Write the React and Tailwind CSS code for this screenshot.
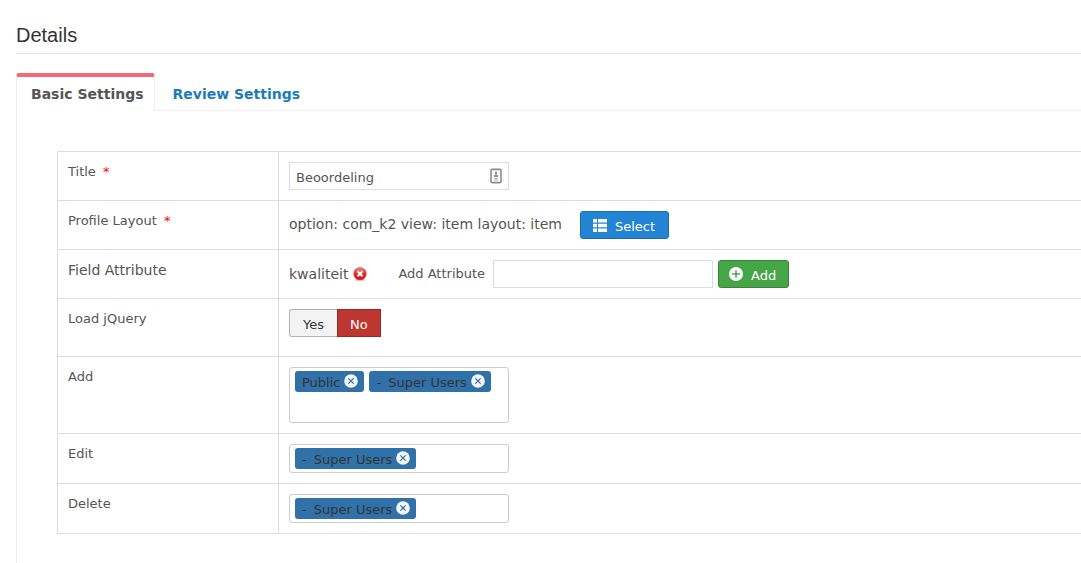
import { useState } from "react";

function Row({ label, htmlFor, required, large, tall, children }) {
  return (
    <div className="grid grid-cols-[221px_1fr] border-b border-[#dddddd]">
      <div className="border-r border-[#dddddd] p-2.5">
        <label htmlFor={htmlFor} className={large ? "block text-sm leading-5" : "block text-[13px] leading-5"}>
          {label}
          {required && <span className="ml-[3px] text-[#ff0000]"> *</span>}
        </label>
      </div>
      <div className={tall ? "px-2.5 pt-2.5 pb-[19px]" : "p-2.5"}>{children}</div>
    </div>
  );
}

function CloseBadge() {
  return (
    <svg width="14" height="14" viewBox="0 0 14 14" aria-hidden="true">
      <circle cx="7" cy="7" r="6.8" fill="#f5f5f5" />
      <path d="M4.4 4.4l5.2 5.2M9.6 4.4l-5.2 5.2" stroke="#3071a9" strokeWidth="1.3" />
    </svg>
  );
}

function GroupPicker({ id, initial, big }) {
  const [groups, setGroups] = useState(initial);
  return (
    <div
      id={id}
      className={
        "flex w-[220px] flex-wrap content-start gap-[5px] rounded-[3px] border border-[#cccccc] px-[5px] py-[3px] " +
        (big ? "h-14" : "h-[29px]")
      }
    >
      {groups.map((g) => (
        <span
          key={g.name}
          className="flex h-[21px] items-center gap-1 rounded-[3px] bg-[#3071a9] pr-1.5 pl-[7px] text-[13px] leading-5 whitespace-nowrap text-[#333333]"
        >
          <span className="flex gap-[7px] pt-0.5">
            {g.child && <span>-</span>}
            <span>{g.name}</span>
          </span>
          <button
            type="button"
            className="pb-0.5"
            aria-label={"Remove " + g.name}
            onClick={() => setGroups(groups.filter((x) => x.name !== g.name))}
          >
            <CloseBadge />
          </button>
        </span>
      ))}
    </div>
  );
}

const PUBLIC = { name: "Public", child: false };
const SUPER_USERS = { name: "Super Users", child: true };

export default function App() {
  const [title, setTitle] = useState("Beoordeling");
  const [attribute, setAttribute] = useState("");
  const [jquery, setJquery] = useState(false);

  return (
    <main className="overflow-hidden bg-white pt-[25px] pl-4 font-['DejaVu_Sans',sans-serif] text-[#555555]">
      <h1 className="border-b border-[#e5e5e5] pb-2 font-['Liberation_Sans',sans-serif] text-xl leading-5 text-[#333333]">
        Details
      </h1>
      <nav className="mt-[19px] flex text-sm leading-5 font-bold">
        <a
          href="#basic"
          className="rounded-t-[3px] border-x border-t-4 border-x-[#eeeeee] border-t-[#ef6b76] pt-[7px] pr-2.5 pb-[7px] pl-3.5"
        >
          Basic Settings
        </a>
        <div className="flex-1 border-b border-[#eeeeee] pt-[11px] pl-[18px]">
          <a href="#review" className="text-[#1c7cba]">
            Review Settings
          </a>
        </div>
      </nav>
      <form className="border-l border-[#eeeeee] pt-10 pb-[30px] pl-10" onSubmit={(e) => e.preventDefault()}>
        <div className="border-t border-l border-[#dddddd]">
          <Row label="Title" htmlFor="title" required>
            <div className="relative w-[220px]">
              <input
                id="title"
                value={title}
                onChange={(e) => setTitle(e.target.value)}
                className="block h-7 w-full border border-[#dddddd] pt-0.5 pr-6 pl-1.5 text-[13px] leading-5"
              />
              <svg className="absolute top-1.5 right-[7px]" width="12" height="16" viewBox="0 0 12 16" aria-hidden="true">
                <rect x="1" y="1.4" width="10" height="13.2" rx="1" fill="#fafafa" stroke="#8c8c8c" strokeWidth="1.6" />
                <circle cx="6" cy="5" r="1.2" fill="#8c8c8c" />
                <path d="M4 8.9V7.8Q4.2 6.6 6 6.2Q7.8 6.6 8 7.8V8.9Z" fill="#8c8c8c" />
                <path d="M4 10.5h4M4 12h4" stroke="#b5b5b5" />
              </svg>
            </div>
          </Row>
          <Row label="Profile Layout" htmlFor="layout" required>
            <div className="flex gap-[18px]">
              <span className="pt-[3px] text-sm leading-5">option: com_k2 view: item layout: item</span>
              <button
                id="layout"
                type="button"
                className="flex h-7 items-center gap-2 rounded-[3px] border border-[#1f6aab] bg-[#2384d3] pr-[13px] pl-3 text-[13px] leading-5 text-white"
              >
                <svg width="14" height="13" viewBox="0 0 14 13" fill="currentColor" aria-hidden="true">
                  <path d="M0 0h4v3.6H0zM5 0h9v3.6H5zM0 4.7h4v3.6H0zM5 4.7h9v3.6H5zM0 9.4h4V13H0zM5 9.4h9V13H5z" />
                </svg>
                <span className="pt-1">Select</span>
              </button>
            </div>
          </Row>
          <Row label="Field Attribute" htmlFor="attribute" large>
            <div className="flex items-center gap-[5px]">
              <span className="text-sm leading-5">kwaliteit</span>
              <button type="button" aria-label="Remove kwaliteit" className="mr-[26px]">
                <svg width="14" height="14" viewBox="0 0 14 14" aria-hidden="true">
                  <defs>
                    <linearGradient id="ball" x1="0" y1="0" x2="0" y2="1">
                      <stop offset="0" stopColor="#f08a86" />
                      <stop offset="0.5" stopColor="#e02a2a" />
                      <stop offset="1" stopColor="#e80c0c" />
                    </linearGradient>
                  </defs>
                  <ellipse cx="7" cy="13" rx="5.8" ry="1" fill="#dddddd" />
                  <circle cx="7" cy="6.8" r="6.3" fill="url(#ball)" stroke="#d04343" strokeWidth="0.6" />
                  <path d="M4.5 4.3l5 5M9.5 4.3l-5 5" stroke="#ffffff" strokeWidth="2.2" />
                </svg>
              </button>
              <label htmlFor="attribute" className="mr-[3px] text-[13px] leading-5">
                Add Attribute
              </label>
              <input
                id="attribute"
                value={attribute}
                onChange={(e) => setAttribute(e.target.value)}
                className="h-7 w-[220px] border border-[#dddddd] px-1.5 text-[13px] leading-5"
              />
              <button
                type="button"
                className="flex h-7 items-center gap-2 rounded-[3px] border border-[#398439] bg-[#46a546] pr-3 pl-2.5 text-[13px] leading-5 text-white"
              >
                <svg width="14" height="14" viewBox="0 0 14 14" aria-hidden="true">
                  <circle cx="7" cy="7" r="7" fill="#ffffff" />
                  <path d="M7 3.2v7.6M3.2 7h7.6" stroke="#46a546" strokeWidth="1.5" />
                </svg>
                <span className="pt-1">Add</span>
              </button>
            </div>
          </Row>
          <Row label="Load jQuery" htmlFor="jquery" tall>
            <div id="jquery" role="group" className="flex text-[13px] leading-5">
              <button
                type="button"
                aria-pressed={jquery}
                onClick={() => setJquery(true)}
                className={
                  "h-7 rounded-l-[3px] border border-r-0 px-[13px] pt-1 " +
                  (jquery ? "border-[#398439] bg-[#46a546] text-white" : "border-[#b3b3b3] bg-[#f3f3f3] text-[#333333]")
                }
              >
                Yes
              </button>
              <button
                type="button"
                aria-pressed={!jquery}
                onClick={() => setJquery(false)}
                className={
                  "h-7 border px-3 pt-1 " +
                  (jquery ? "border-[#b3b3b3] bg-[#f3f3f3] text-[#333333]" : "border-[#942a25] bg-[#bd362f] text-white")
                }
              >
                No
              </button>
            </div>
          </Row>
          <Row label="Add" htmlFor="add">
            <GroupPicker id="add" initial={[PUBLIC, SUPER_USERS]} big />
          </Row>
          <Row label="Edit" htmlFor="edit">
            <GroupPicker id="edit" initial={[SUPER_USERS]} />
          </Row>
          <Row label="Delete" htmlFor="delete">
            <GroupPicker id="delete" initial={[SUPER_USERS]} />
          </Row>
        </div>
      </form>
    </main>
  );
}
